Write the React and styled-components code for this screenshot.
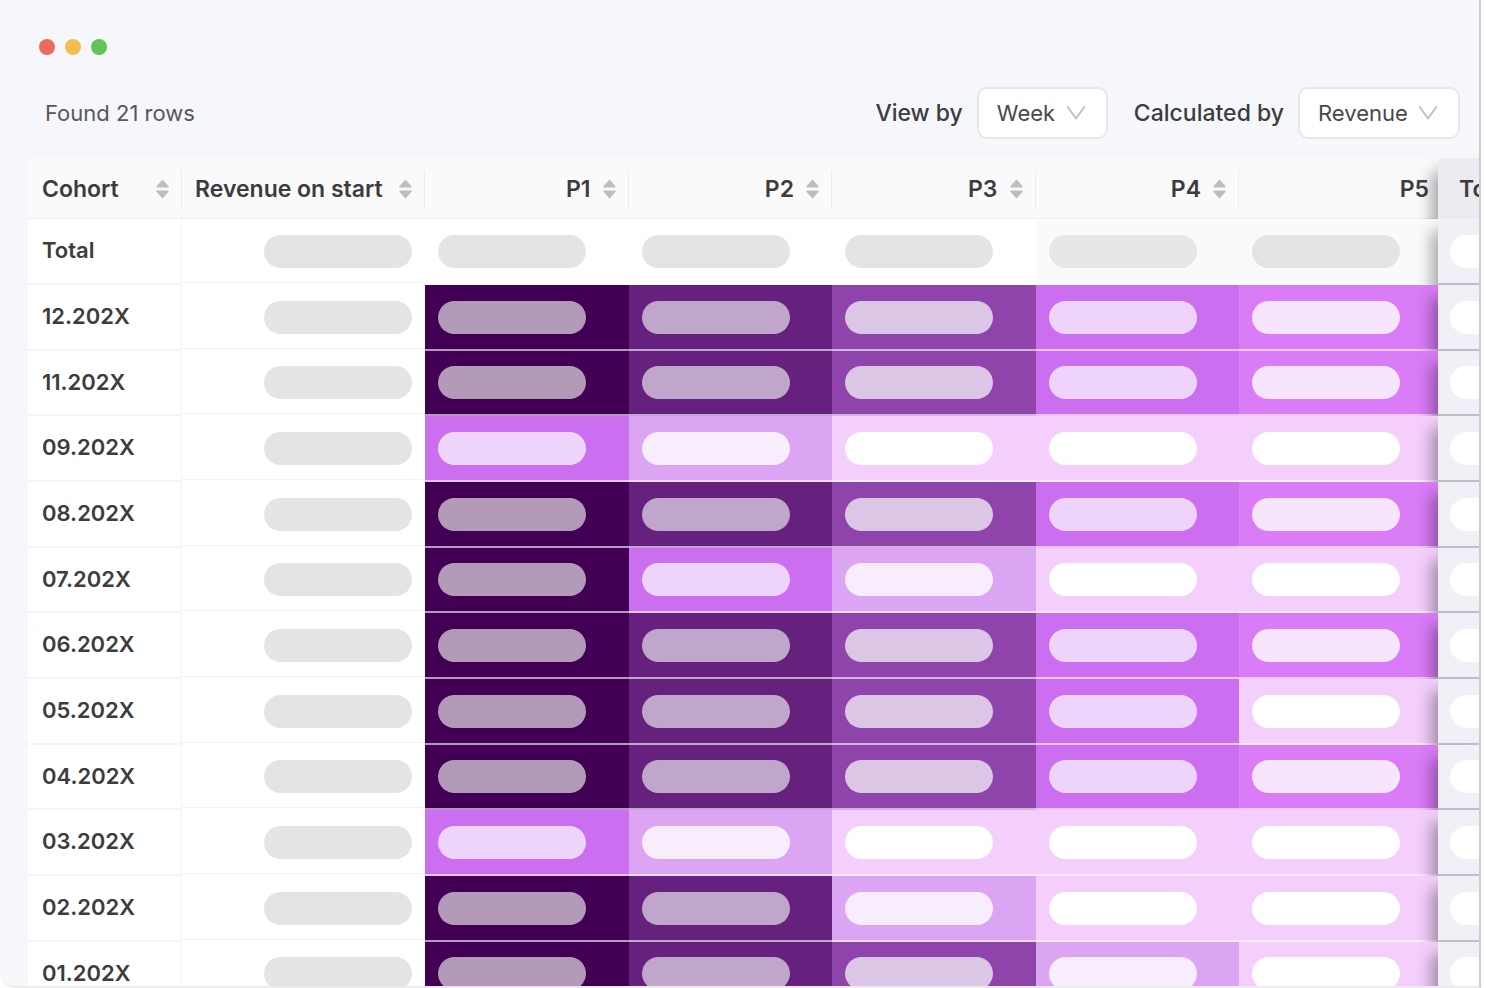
import React from "react";
import styled, { createGlobalStyle } from "styled-components";

const GlobalStyle = createGlobalStyle`
  *, *::before, *::after { box-sizing: border-box; }
  body {
    margin: 0;
    background: #fff;
    color: #3c3c3e;
    font-family: Inter, "Liberation Sans", sans-serif;
    font-size: 22px;
    line-height: 28px;
  }
`;

const Frame = styled.main`
  height: 100vh;
  margin-right: 5px;
  overflow: hidden;
  display: flex;
  flex-direction: column;
  background: #f5f7fb;
  border-right: 2px solid #cdcdcf;
  border-bottom: 2px solid #ececec;
  border-bottom-left-radius: 16px;
`;

const TitleBar = styled.header`
  display: flex;
  gap: 10px;
  padding: 39px 39px 0;
`;

const WindowDot = styled.span`
  width: 16px;
  height: 16px;
  border-radius: 50%;
  background: ${(p) => p.$color};
`;

const Toolbar = styled.div`
  display: flex;
  align-items: center;
  justify-content: space-between;
  padding: 32px 19px 19px 45px;
`;

const RowCount = styled.p`
  margin: 0;
  color: #58585a;
`;

const Filters = styled.div`
  display: flex;
  gap: 26px;
`;

const Filter = styled.div`
  display: flex;
  align-items: center;
  gap: 14px;
`;

const FilterLabel = styled.label`
  font-size: 23px;
  font-weight: 500;
`;

const SelectBox = styled.div`
  display: grid;
  align-items: center;

  > * { grid-area: 1 / 1; }
  > svg {
    justify-self: end;
    margin-right: 22px;
    pointer-events: none;
  }
`;

const Select = styled.select`
  appearance: none;
  height: 52px;
  padding: 0 50px 0 18px;
  border: 2px solid #e6e7e9;
  border-radius: 10px;
  background: #fff;
  color: #48484a;
  font: inherit;
`;

const TableScroll = styled.div`
  flex: 1;
  min-height: 0;
  margin-left: 28px;
  overflow: hidden;
`;

const Table = styled.table`
  width: 100%;
  table-layout: fixed;
  border-collapse: separate;
  border-spacing: 0;
`;

const Col = styled.col`
  width: ${(p) => p.$width || "auto"};
`;

const HeadCell = styled.th`
  height: 61px;
  padding: 2px 0 0;
  background: #fafafa;
  border-bottom: 1px solid #efefef;
  font-size: 23px;
  font-weight: 600;
  white-space: nowrap;
`;

const HeadContent = styled.div`
  display: flex;
  align-items: center;
  justify-content: ${(p) => (p.$end ? "flex-end" : "space-between")};
  gap: 12px;
  height: 38px;
  padding: 0 ${(p) => (p.$last ? 9 : 12)}px 0 ${(p) => (p.$first ? 14 : 13)}px;
  border-right: ${(p) => (p.$last ? "0" : "1px solid #ebebeb")};
`;

const SortButton = styled.button`
  display: flex;
  padding: 0;
  border: 0;
  background: none;
  color: #bdbdbd;
`;

const PinnedHead = styled(HeadCell)`
  padding-left: 21px;
  overflow: hidden;
  text-align: left;
  background: #edebf2;
  border-bottom-color: #efeef5;
  border-top-left-radius: 10px;
  box-shadow: -6px 12px 16px rgba(0, 0, 0, 0.35);
`;

const Row = styled.tr`
  height: 66px;
  &:nth-child(3n) { height: 65px; }
`;

const CohortCell = styled.th`
  padding: 0 14px 2px;
  background: #fff;
  border-right: 1px solid #f3f3f3;
  border-bottom: 2px solid #f5f5f5;
  font-weight: 600;
  text-align: left;
`;

const RevenueCell = styled.td`
  padding: 0 13px;
  background: #fff;
  border-bottom: 2px solid #fff;
  box-shadow: inset 0 -1px #f1f1f1;
`;

const HeatCell = styled.td`
  padding: 0 13px;
  background: ${(p) => p.$fill};
  border-bottom: 2px solid rgba(255, 255, 255, 0.6);
`;

const PinnedCell = styled.td`
  padding: 0 0 0 12px;
  overflow: hidden;
  background: #f1f0f6;
  border-bottom: 2px solid #c6bccb;
  box-shadow: -6px 12px 16px rgba(0, 0, 0, 0.35);
`;

const Pill = styled.div`
  width: 148px;
  height: 33px;
  margin-left: ${(p) => (p.$end ? "auto" : "0")};
  border-radius: 17px;
  background: ${(p) => p.$color};
`;

const shades = {
  w: { fill: "#ffffff", pill: "#e4e4e4" },
  g: { fill: "#fafafa", pill: "#e7e7e7" },
  h: { fill: "#fafafa", pill: "#e4e4e4" },
  a: { fill: "#420055", pill: "#b29ab8" },
  b: { fill: "#66217f", pill: "#c0a6cb" },
  c: { fill: "#8e44ab", pill: "#dcc6e5" },
  d: { fill: "#cb6ef0", pill: "#eed4fa" },
  e: { fill: "#da7bf8", pill: "#f7e5fd" },
  f: { fill: "#dca5f4", pill: "#f8edfd" },
  p: { fill: "#f4cffc", pill: "#ffffff" },
};

const rows = [
  ["Total", "wwwgh"],
  ["12.202X", "abcde"],
  ["11.202X", "abcde"],
  ["09.202X", "dfppp"],
  ["08.202X", "abcde"],
  ["07.202X", "adfpp"],
  ["06.202X", "abcde"],
  ["05.202X", "abcdp"],
  ["04.202X", "abcde"],
  ["03.202X", "dfppp"],
  ["02.202X", "abfpp"],
  ["01.202X", "abcfp"],
];

const periods = ["P1", "P2", "P3", "P4"];

function Sorter({ label }) {
  return (
    <SortButton type="button" aria-label={`Sort by ${label}`}>
      <svg width="13" height="20" viewBox="0 0 13 20" fill="currentColor" aria-hidden="true">
        <path d="M6.5 0.5 12.6 7.3Q12.9 8.4 12 8.4H1Q.1 8.4 .4 7.3Z" />
        <path d="M6.5 19.5 12.6 12.7Q12.9 11.6 12 11.6H1Q.1 11.6 .4 12.7Z" />
      </svg>
    </SortButton>
  );
}

function FilterSelect({ id, label, value }) {
  return (
    <Filter>
      <FilterLabel htmlFor={id}>{label}</FilterLabel>
      <SelectBox>
        <Select id={id} defaultValue={value}>
          <option>{value}</option>
        </Select>
        <svg width="20" height="16" viewBox="0 0 20 16" fill="none" stroke="#bfbfbf" strokeWidth="1.8" aria-hidden="true">
          <path d="M1.3 1.5 10 13.4 18.7 1.5" />
        </svg>
      </SelectBox>
    </Filter>
  );
}

export default function App() {
  return (
    <>
      <GlobalStyle />
      <Frame>
        <TitleBar>
          <WindowDot $color="#ed6a5e" />
          <WindowDot $color="#f4bd50" />
          <WindowDot $color="#61c455" />
        </TitleBar>
        <Toolbar>
          <RowCount>Found 21 rows</RowCount>
          <Filters>
            <FilterSelect id="view-by" label="View by" value="Week" />
            <FilterSelect id="calculated-by" label="Calculated by" value="Revenue" />
          </Filters>
        </Toolbar>
        <TableScroll>
          <Table>
            <colgroup>
              <Col $width="154px" />
              <Col $width="243px" />
              {periods.map((p) => (
                <Col key={p} />
              ))}
              <Col $width="199px" />
              <Col $width="41px" />
            </colgroup>
            <thead>
              <tr>
                <HeadCell scope="col">
                  <HeadContent $first>
                    Cohort
                    <Sorter label="cohort" />
                  </HeadContent>
                </HeadCell>
                <HeadCell scope="col">
                  <HeadContent>
                    Revenue on start
                    <Sorter label="revenue on start" />
                  </HeadContent>
                </HeadCell>
                {periods.map((p) => (
                  <HeadCell scope="col" key={p}>
                    <HeadContent $end>
                      {p}
                      <Sorter label={p} />
                    </HeadContent>
                  </HeadCell>
                ))}
                <HeadCell scope="col">
                  <HeadContent $end $last>P5</HeadContent>
                </HeadCell>
                <PinnedHead scope="col">Total</PinnedHead>
              </tr>
            </thead>
            <tbody>
              {rows.map(([name, codes]) => (
                <Row key={name}>
                  <CohortCell scope="row">{name}</CohortCell>
                  <RevenueCell>
                    <Pill $end $color="#e4e4e4" />
                  </RevenueCell>
                  {codes.split("").map((code, i) => (
                    <HeatCell key={i} $fill={shades[code].fill}>
                      <Pill $color={shades[code].pill} />
                    </HeatCell>
                  ))}
                  <PinnedCell>
                    <Pill $color="#ffffff" />
                  </PinnedCell>
                </Row>
              ))}
            </tbody>
          </Table>
        </TableScroll>
      </Frame>
    </>
  );
}
